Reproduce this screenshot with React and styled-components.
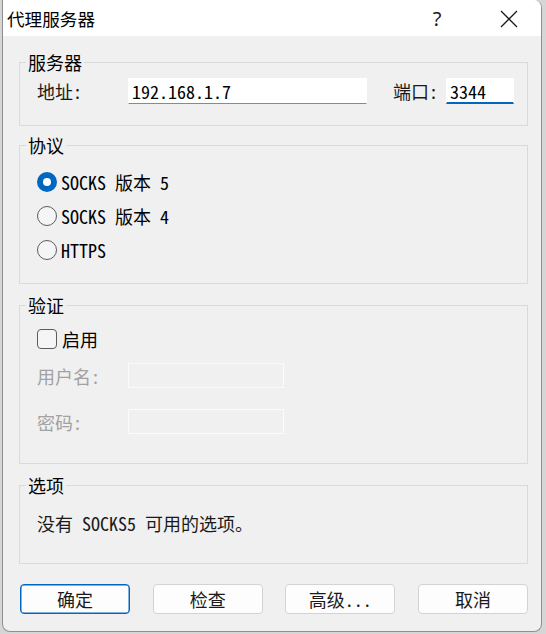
import React from 'react';
import styled, { createGlobalStyle } from 'styled-components';

const UI = '"Noto Sans Mono CJK SC", "Noto Sans CJK SC", "Liberation Mono", monospace';
const TITLE = '"Noto Sans CJK SC", "Noto Sans", sans-serif';

const Global = createGlobalStyle`
  html, body { margin: 0; padding: 0; background: #d6d6d6; }
  body { width: 546px; height: 634px; overflow: hidden; }
  * { box-sizing: border-box; }
`;

const Window = styled.div`
  margin-left: 2px;
  width: 540px;
  height: 632px;
  border: 1px solid #8e8e8e;
  border-top: none;
  border-radius: 0 8px 8px 8px;
  background: #f0f0f0;
  overflow: hidden;
  display: flex;
  flex-direction: column;
  font-family: ${UI};
  font-size: 18px;
  line-height: 20px;
  color: #000;
`;

const TitleBar = styled.div`
  height: 36px;
  flex: none;
  background: #fff;
  display: flex;
  align-items: center;
  padding: 2px 0 0 4px;
`;

const Title = styled.div`
  flex: 1;
  font-family: ${TITLE};
  font-size: 17.6px;
  line-height: 20px;
  color: #000;
`;

const TitleButton = styled.div`
  width: ${(p) => p.$w}px;
  height: 34px;
  display: flex;
  align-items: center;
  justify-content: center;
  margin-right: ${(p) => p.$mr || 0}px;
  font-family: "Noto Sans", "Open Sans", sans-serif;
  font-size: 20px;
  font-weight: 400;
  color: #1a1a1a;
`;

const Body = styled.div`
  flex: 1;
  display: flex;
  flex-direction: column;
  padding: 16px 13px 0 16px;
`;

const Group = styled.fieldset`
  margin: 0 0 ${(p) => p.$mb || 10}px 0;
  padding: 0;
  min-width: 0;
  border: 1px solid #dadada;
  border-radius: 0;
`;

const Legend = styled.legend`
  margin-left: 6px;
  padding: 0 2px;
  line-height: 20px;
  font-size: 18px;
`;

const GroupContent = styled.div`
  padding: ${(p) => p.$pad};
  display: flex;
  flex-direction: column;
`;

const FieldRow = styled.div`
  display: flex;
  align-items: center;
  height: ${(p) => p.$h || 26}px;
  margin-top: ${(p) => p.$mt || 0}px;
`;

const Label = styled.span`
  width: ${(p) => p.$w}px;
  flex: none;
  margin-left: ${(p) => p.$ml || 0}px;
  color: ${(p) => (p.$disabled ? '#a2a2a2' : '#1a1a1a')};
  white-space: pre;
`;

const TextBox = styled.div`
  width: ${(p) => p.$w}px;
  height: ${(p) => p.$h || 26}px;
  flex: none;
  background: ${(p) => (p.$disabled ? '#f0f0f0' : '#fff')};
  border: 1px solid ${(p) => (p.$disabled ? '#fbfbfb' : '#fff')};
  border-bottom: ${(p) =>
    p.$disabled ? '1px solid #fbfbfb' : p.$focused ? '2px solid #0067c0' : '1px solid #8a8a8a'};
  padding-left: 3px;
  display: flex;
  align-items: center;
  white-space: pre;
  color: #000;
`;

const OptionRow = styled.div`
  display: flex;
  align-items: center;
  height: 34px;
  white-space: pre;
`;

const Radio = styled.span`
  width: 20px;
  height: 20px;
  flex: none;
  border-radius: 50%;
  margin-right: 4px;
  position: relative;
  background: ${(p) => (p.$checked ? '#0067c0' : '#f5f5f5')};
  border: ${(p) => (p.$checked ? 'none' : '1px solid #5c5c5c')};
  &::after {
    content: '';
    display: ${(p) => (p.$checked ? 'block' : 'none')};
    position: absolute;
    left: 6px;
    top: 6px;
    width: 8px;
    height: 8px;
    border-radius: 50%;
    background: #fff;
  }
`;

const CheckBox = styled.span`
  width: 20px;
  height: 20px;
  flex: none;
  border-radius: 4px;
  border: 1px solid #5c5c5c;
  background: #f5f5f5;
  margin-right: 5px;
`;

const Note = styled.div`
  white-space: pre;
  color: #1a1a1a;
`;

const ButtonBar = styled.div`
  display: flex;
  justify-content: space-between;
  margin-top: 10px;
  padding: 0 0 0 1px;
`;

const Button = styled.div`
  width: 110px;
  height: 30px;
  border-radius: 4px;
  background: #fdfdfd;
  border: 1px solid ${(p) => (p.$default ? '#0067c0' : '#d3d3d3')};
  box-shadow: ${(p) => (p.$default ? 'inset 0 0 0 0.5px #0067c0' : 'none')};
  display: flex;
  align-items: center;
  justify-content: center;
  white-space: pre;
  color: #1a1a1a;
`;

function CloseIcon() {
  return (
    <svg width="18" height="18" viewBox="0 0 18 18">
      <path d="M1 1 L17 17 M17 1 L1 17" stroke="#1a1a1a" strokeWidth="1.3" fill="none" />
    </svg>
  );
}

export default function App() {
  return (
    <>
      <Global />
      <Window>
        <TitleBar>
          <Title>代理服务器</Title>
          <TitleButton $w={64} $mr={8}>?</TitleButton>
          <TitleButton $w={64}><CloseIcon /></TitleButton>
        </TitleBar>
        <Body>
          <Group $mb={9}>
            <Legend>服务器</Legend>
            <GroupContent $pad="6px 12px 21px 17px">
              <FieldRow>
                <Label $w={91}>地址:</Label>
                <TextBox $w={239}>192.168.1.7</TextBox>
                <Label $w={53} $ml={26}>端口:</Label>
                <TextBox $w={68} $focused>3344</TextBox>
              </FieldRow>
            </GroupContent>
          </Group>

          <Group $mb={11}>
            <Legend>协议</Legend>
            <GroupContent $pad="10px 12px 16px 17px">
              <OptionRow><Radio $checked />SOCKS 版本 5</OptionRow>
              <OptionRow><Radio />SOCKS 版本 4</OptionRow>
              <OptionRow><Radio />HTTPS</OptionRow>
            </GroupContent>
          </Group>

          <Group $mb={11}>
            <Legend>验证</Legend>
            <GroupContent $pad="14px 12px 29px 17px">
              <FieldRow $h={20}><CheckBox />启用</FieldRow>
              <FieldRow $h={25} $mt={14}>
                <Label $w={91} $disabled>用户名:</Label>
                <TextBox $w={156} $h={25} $disabled />
              </FieldRow>
              <FieldRow $h={25} $mt={21}>
                <Label $w={91} $disabled>密码:</Label>
                <TextBox $w={156} $h={25} $disabled />
              </FieldRow>
            </GroupContent>
          </Group>

          <Group $mb={0}>
            <Legend>选项</Legend>
            <GroupContent $pad="18px 12px 30px 17px">
              <Note>没有 SOCKS5 可用的选项。</Note>
            </GroupContent>
          </Group>

          <ButtonBar>
            <Button $default>确定</Button>
            <Button>检查</Button>
            <Button>高级...</Button>
            <Button>取消</Button>
          </ButtonBar>
        </Body>
      </Window>
    </>
  );
}
